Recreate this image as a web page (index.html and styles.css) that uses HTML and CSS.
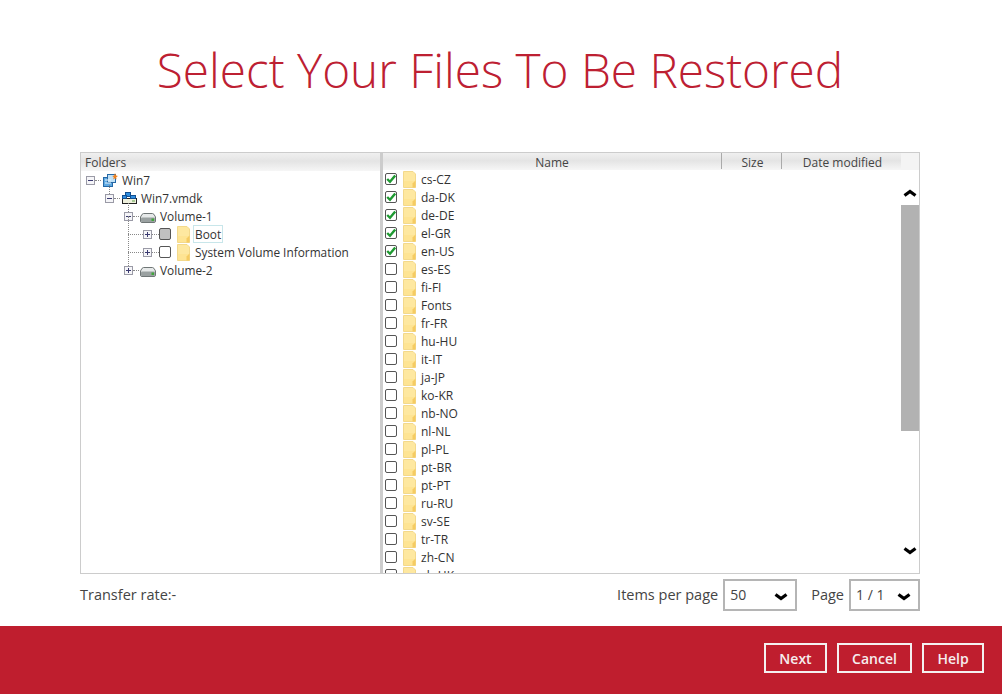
FILE: index.html
```html
<!DOCTYPE html>
<html>

<head>
    <meta charset="utf-8">
    <title>Select Your Files To Be Restored</title>
    <link rel="stylesheet" href="styles.css">
</head>

<body>
    <svg class="defs" width="0" height="0">
        <symbol id="folder" viewBox="0 0 13 17">
            <path d="M0.5 0.5H10L12.5 3V16.5H0.5Z" fill="#fee8a0" stroke="#f3d98c"/>
            <path d="M1 10H12V16H1Z" fill="#fde18a" opacity="0.6"/>
            <path d="M12.5 9.5V16.5H9.5V12.5Z" fill="#f5cb62"/>
        </symbol>
        <symbol id="drive" viewBox="0 0 16 10">
            <path d="M3.5 0.5H12.5Q14 0.5 15.5 4V8Q15.5 9.5 14 9.5H2Q0.5 9.5 0.5 8V4Q2 0.5 3.5 0.5Z" fill="#e6e9e9" stroke="#6f7676"/>
            <rect x="1" y="4.5" width="14" height="4.5" rx="1" fill="#9aa1a1"/>
            <rect x="11.5" y="5.5" width="2.5" height="2.5" fill="#3fa63a"/>
        </symbol>
        <symbol id="plus" viewBox="0 0 9 9">
            <rect x="0.5" y="0.5" width="8" height="8" fill="#f5f5f8" stroke="#9a9aa6"/>
            <path d="M2 4.5H7M4.5 2V7" stroke="#3a3a70"/>
        </symbol>
        <symbol id="minus" viewBox="0 0 9 9">
            <rect x="0.5" y="0.5" width="8" height="8" fill="#f5f5f8" stroke="#9a9aa6"/>
            <path d="M2 4.5H7" stroke="#3a3a70"/>
        </symbol>
        <symbol id="tick" viewBox="0 0 10 10">
            <path d="M1.2 5L4 7.8L9.2 1.6" fill="none" stroke="#1f9a32" stroke-width="2.4"/>
        </symbol>
        <symbol id="chevron" viewBox="0 0 14 8">
            <path d="M1.5 1.5L7 5.5L12.5 1.5" fill="none" stroke="#000" stroke-width="3.2"/>
        </symbol>
    </svg>

    <h1 class="page_title">Select Your Files To Be Restored</h1>

    <div class="browser">
        <div class="tree_pane">
            <div class="pane_head folders_head">Folders</div>

            <div class="tree_row level_0">
                <svg class="expander"><use href="#minus"/></svg>
                <svg class="node_icon win_icon" viewBox="0 0 15 14">
                    <rect x="0.5" y="4.5" width="9" height="9" fill="#5fa9e2" stroke="#2568a6"/>
                    <rect x="4.5" y="1.5" width="8" height="8" fill="#bfe0f6" stroke="#2568a6"/>
                    <path d="M2 7H8M2 10H8" stroke="#e6f3fc"/>
                    <path d="M12 0L13 2.5L15 3L13.2 4.3L13.6 6.5L12 5.2L10.2 6.5L10.8 4.3L9.2 3L11.2 2.5Z" fill="#f0801c"/>
                </svg>
                <span class="node_text">Win7</span>
            </div>
            <div class="tree_row level_1">
                <svg class="expander"><use href="#minus"/></svg>
                <svg class="node_icon vmdk_icon" viewBox="0 0 15 12">
                    <rect x="0.5" y="6.5" width="14" height="5" fill="#eef0dc" stroke="#222"/>
                    <path d="M10 9H13" stroke="#5fa04a"/>
                    <rect x="3.5" y="0.5" width="5" height="4" fill="#2f8ee0" stroke="#124f90"/>
                    <rect x="8.5" y="3.5" width="5" height="3" fill="#2f8ee0" stroke="#124f90"/>
                    <rect x="0.5" y="3.5" width="4" height="3" fill="#2f8ee0" stroke="#124f90"/>
                </svg>
                <span class="node_text">Win7.vmdk</span>
            </div>
            <div class="tree_row level_2">
                <svg class="expander"><use href="#minus"/></svg>
                <svg class="node_icon drive_icon"><use href="#drive"/></svg>
                <span class="node_text">Volume-1</span>
            </div>
            <div class="tree_row level_3">
                <svg class="expander"><use href="#plus"/></svg>
                <span class="check check_partial"></span>
                <svg class="folder"><use href="#folder"/></svg>
                <span class="node_text focused">Boot</span>
            </div>
            <div class="tree_row level_3">
                <svg class="expander"><use href="#plus"/></svg>
                <span class="check"></span>
                <svg class="folder"><use href="#folder"/></svg>
                <span class="node_text plain">System Volume Information</span>
            </div>
            <div class="tree_row level_2 last_node">
                <svg class="expander"><use href="#plus"/></svg>
                <svg class="node_icon drive_icon"><use href="#drive"/></svg>
                <span class="node_text">Volume-2</span>
            </div>
        </div>

        <div class="file_pane">
            <div class="pane_head file_head">
                <div class="col col_name">Name</div>
                <div class="col col_size">Size</div>
                <div class="col col_date">Date modified</div>
                <div class="col_rest"></div>
            </div>
            <div class="file_body">
                <div class="file_list">
                    <div class="file_row"><span class="check"><svg><use href="#tick"/></svg></span><svg class="folder"><use href="#folder"/></svg><span>cs-CZ</span></div>
                    <div class="file_row"><span class="check"><svg><use href="#tick"/></svg></span><svg class="folder"><use href="#folder"/></svg><span>da-DK</span></div>
                    <div class="file_row"><span class="check"><svg><use href="#tick"/></svg></span><svg class="folder"><use href="#folder"/></svg><span>de-DE</span></div>
                    <div class="file_row"><span class="check"><svg><use href="#tick"/></svg></span><svg class="folder"><use href="#folder"/></svg><span>el-GR</span></div>
                    <div class="file_row"><span class="check"><svg><use href="#tick"/></svg></span><svg class="folder"><use href="#folder"/></svg><span>en-US</span></div>
                    <div class="file_row"><span class="check"></span><svg class="folder"><use href="#folder"/></svg><span>es-ES</span></div>
                    <div class="file_row"><span class="check"></span><svg class="folder"><use href="#folder"/></svg><span>fi-FI</span></div>
                    <div class="file_row"><span class="check"></span><svg class="folder"><use href="#folder"/></svg><span>Fonts</span></div>
                    <div class="file_row"><span class="check"></span><svg class="folder"><use href="#folder"/></svg><span>fr-FR</span></div>
                    <div class="file_row"><span class="check"></span><svg class="folder"><use href="#folder"/></svg><span>hu-HU</span></div>
                    <div class="file_row"><span class="check"></span><svg class="folder"><use href="#folder"/></svg><span>it-IT</span></div>
                    <div class="file_row"><span class="check"></span><svg class="folder"><use href="#folder"/></svg><span>ja-JP</span></div>
                    <div class="file_row"><span class="check"></span><svg class="folder"><use href="#folder"/></svg><span>ko-KR</span></div>
                    <div class="file_row"><span class="check"></span><svg class="folder"><use href="#folder"/></svg><span>nb-NO</span></div>
                    <div class="file_row"><span class="check"></span><svg class="folder"><use href="#folder"/></svg><span>nl-NL</span></div>
                    <div class="file_row"><span class="check"></span><svg class="folder"><use href="#folder"/></svg><span>pl-PL</span></div>
                    <div class="file_row"><span class="check"></span><svg class="folder"><use href="#folder"/></svg><span>pt-BR</span></div>
                    <div class="file_row"><span class="check"></span><svg class="folder"><use href="#folder"/></svg><span>pt-PT</span></div>
                    <div class="file_row"><span class="check"></span><svg class="folder"><use href="#folder"/></svg><span>ru-RU</span></div>
                    <div class="file_row"><span class="check"></span><svg class="folder"><use href="#folder"/></svg><span>sv-SE</span></div>
                    <div class="file_row"><span class="check"></span><svg class="folder"><use href="#folder"/></svg><span>tr-TR</span></div>
                    <div class="file_row"><span class="check"></span><svg class="folder"><use href="#folder"/></svg><span>zh-CN</span></div>
                    <div class="file_row"><span class="check"></span><svg class="folder"><use href="#folder"/></svg><span>zh-HK</span></div>
                </div>
                <div class="scrollbar">
                    <svg class="scroll_up"><use href="#chevron"/></svg>
                    <div class="scroll_thumb"></div>
                    <svg class="scroll_down"><use href="#chevron"/></svg>
                </div>
            </div>
        </div>
    </div>

    <div class="status_row">
        <div class="transfer_rate">Transfer rate:-</div>
        <div class="pager">
            <span>Items per page</span>
            <div class="select_box items_select"><span>50</span><svg><use href="#chevron"/></svg></div>
            <span class="page_label">Page</span>
            <div class="select_box page_select"><span>1 / 1</span><svg><use href="#chevron"/></svg></div>
        </div>
    </div>

    <div class="footer_bar">
        <button class="next_btn">Next</button>
        <button class="cancel_btn">Cancel</button>
        <button class="help_btn">Help</button>
    </div>
</body>

</html>
```

FILE: styles.css
```css
html, body {
    height: 100%;
}

body {
    margin: 0;
    display: flex;
    flex-direction: column;
    background: #fff;
    font-family: "Open Sans", "Liberation Sans", sans-serif;
    color: #333;
    overflow: hidden;
}

.defs {
    position: absolute;
}

.page_title {
    height: 140px;
    margin: 0 0 12px;
    padding-right: 2px;
    line-height: 140px;
    text-align: center;
    font-size: 47.7px;
    font-weight: 300;
    color: #bd2032;
}

/* browser panel */

.browser {
    display: flex;
    height: 422px;
    margin: 0 82px 0 80px;
    border: 1px solid #ccc;
    box-sizing: border-box;
}

.pane_head {
    height: 18px;
    line-height: 19px;
    font-size: 12px;
    color: #444;
    background: linear-gradient(#f0f0f0 0%, #e4e4e4 45%, #f6f6f6 100%);
}

.tree_pane {
    width: 299px;
    flex: none;
    border-right: 3px solid #ccc;
}

.folders_head {
    padding-left: 4px;
}

.tree_row {
    position: relative;
    display: flex;
    align-items: center;
    height: 18px;
    font-size: 11.85px;
}

.level_0 { padding-left: 5px; }
.level_1 { padding-left: 24px; }
.level_2 { padding-left: 43px; }
.level_3 { padding-left: 62px; }

.expander {
    width: 9px;
    height: 9px;
    flex: none;
    position: relative;
}

/* dotted tree lines */
.tree_row::before {
    content: "";
    position: absolute;
    top: 9px;
    border-top: 1px dotted #888;
}

.level_0::before { left: 14px; width: 6px; }
.level_1::before { left: 33px; width: 6px; }
.level_2::before { left: 52px; width: 6px; }
.level_3::before { left: 47px; width: 31px; }

.level_1::after, .level_2::after, .level_3::after {
    content: "";
    position: absolute;
    top: -4px;
    height: 9px;
    border-left: 1px dotted #888;
}

.level_1::after { left: 28px; }
.level_2::after { left: 47px; }
.level_3::after { left: 47px; top: -9px; height: 18px; }
.last_node::after { top: -9px; height: 14px; }

.node_icon {
    flex: none;
    position: relative;
}

.win_icon {
    width: 15px;
    height: 14px;
    margin-left: 8px;
}

.vmdk_icon {
    width: 15px;
    height: 12px;
    margin-left: 8px;
}

.drive_icon {
    width: 16px;
    height: 10px;
    margin: 4px 0 0 7px;
}

.node_text {
    margin-left: 4px;
    white-space: nowrap;
}

.check {
    display: block;
    flex: none;
    position: relative;
    width: 10px;
    height: 10px;
    border: 1px solid #555;
    border-radius: 2px;
    background: #fff;
}

.check svg {
    display: block;
    width: 10px;
    height: 10px;
}

.check_partial {
    background: #c0c0c0;
}

.tree_row .check {
    margin-left: 7px;
}

.tree_row .folder {
    margin-left: 6px;
}

.folder {
    display: block;
    flex: none;
    position: relative;
    width: 13px;
    height: 17px;
}

.focused {
    margin-left: 3px;
    padding: 0 1px;
    line-height: 16px;
    border: 1px solid #c8e6ea;
}

.plain {
    margin-left: 5px;
}

/* file list */

.file_pane {
    flex: 1;
    min-width: 0;
    display: flex;
    flex-direction: column;
}

.file_head {
    display: flex;
    flex: none;
    height: 17px;
}

.col {
    text-align: center;
    box-sizing: border-box;
    height: 16px;
    line-height: 19px;
}

.col_name {
    width: 339px;
    border-right: 1px solid #aaa;
}

.col_size {
    width: 60px;
    padding-left: 2px;
    border-right: 1px solid #aaa;
}

.col_date {
    width: 119px;
    padding-left: 2px;
}

.col_rest {
    flex: 1;
    background: #f4f4f4;
}

.file_body {
    flex: 1;
    min-height: 0;
    display: flex;
}

.file_list {
    flex: 1;
    overflow: hidden;
    font-size: 12px;
}

.file_row {
    display: flex;
    align-items: center;
    height: 18px;
    padding-left: 2px;
}

.file_row .folder {
    margin: 0 5px 0 6px;
}

.scrollbar {
    width: 18px;
    flex: none;
    display: flex;
    flex-direction: column;
    align-items: center;
}

.scrollbar svg {
    width: 14px;
    height: 8px;
    flex: none;
}

.scroll_up {
    margin-top: 19px;
    transform: scaleY(-1);
}

.scroll_thumb {
    align-self: stretch;
    height: 226px;
    margin-top: 8px;
    background: #b2b2b2;
}

.scroll_down {
    margin-top: 116px;
}

/* pager row */

.status_row {
    display: flex;
    justify-content: space-between;
    align-items: center;
    height: 32px;
    margin: 5px 82px 0 80px;
    font-size: 14.5px;
    line-height: 30px;
    color: #444;
}

.pager {
    display: flex;
    align-items: center;
}

.select_box {
    display: flex;
    align-items: center;
    justify-content: space-between;
    height: 32px;
    margin-left: 5px;
    padding: 0 7px 0 5px;
    border: 2px solid #b5b5b5;
    box-sizing: border-box;
    font-size: 14px;
}

.select_box svg {
    width: 14px;
    height: 8px;
    margin-top: 3px;
}

.items_select {
    width: 74px;
}

.page_select {
    width: 71px;
}

.page_label {
    margin-left: 14px;
}

/* footer */

.footer_bar {
    flex: 1;
    display: flex;
    justify-content: flex-end;
    align-items: center;
    gap: 10px;
    margin-top: 15px;
    padding: 0 18px 4px 0;
    background: #bf1e2e;
}

button {
    height: 30px;
    padding: 0;
    border: 2px solid #f4f0f0;
    background: transparent;
    color: #f6eeee;
    font-family: "Open Sans", "Liberation Sans", sans-serif;
    font-size: 14px;
    font-weight: 600;
    cursor: pointer;
}

.next_btn { width: 63px; }
.cancel_btn { width: 75px; }
.help_btn { width: 62px; }
```
